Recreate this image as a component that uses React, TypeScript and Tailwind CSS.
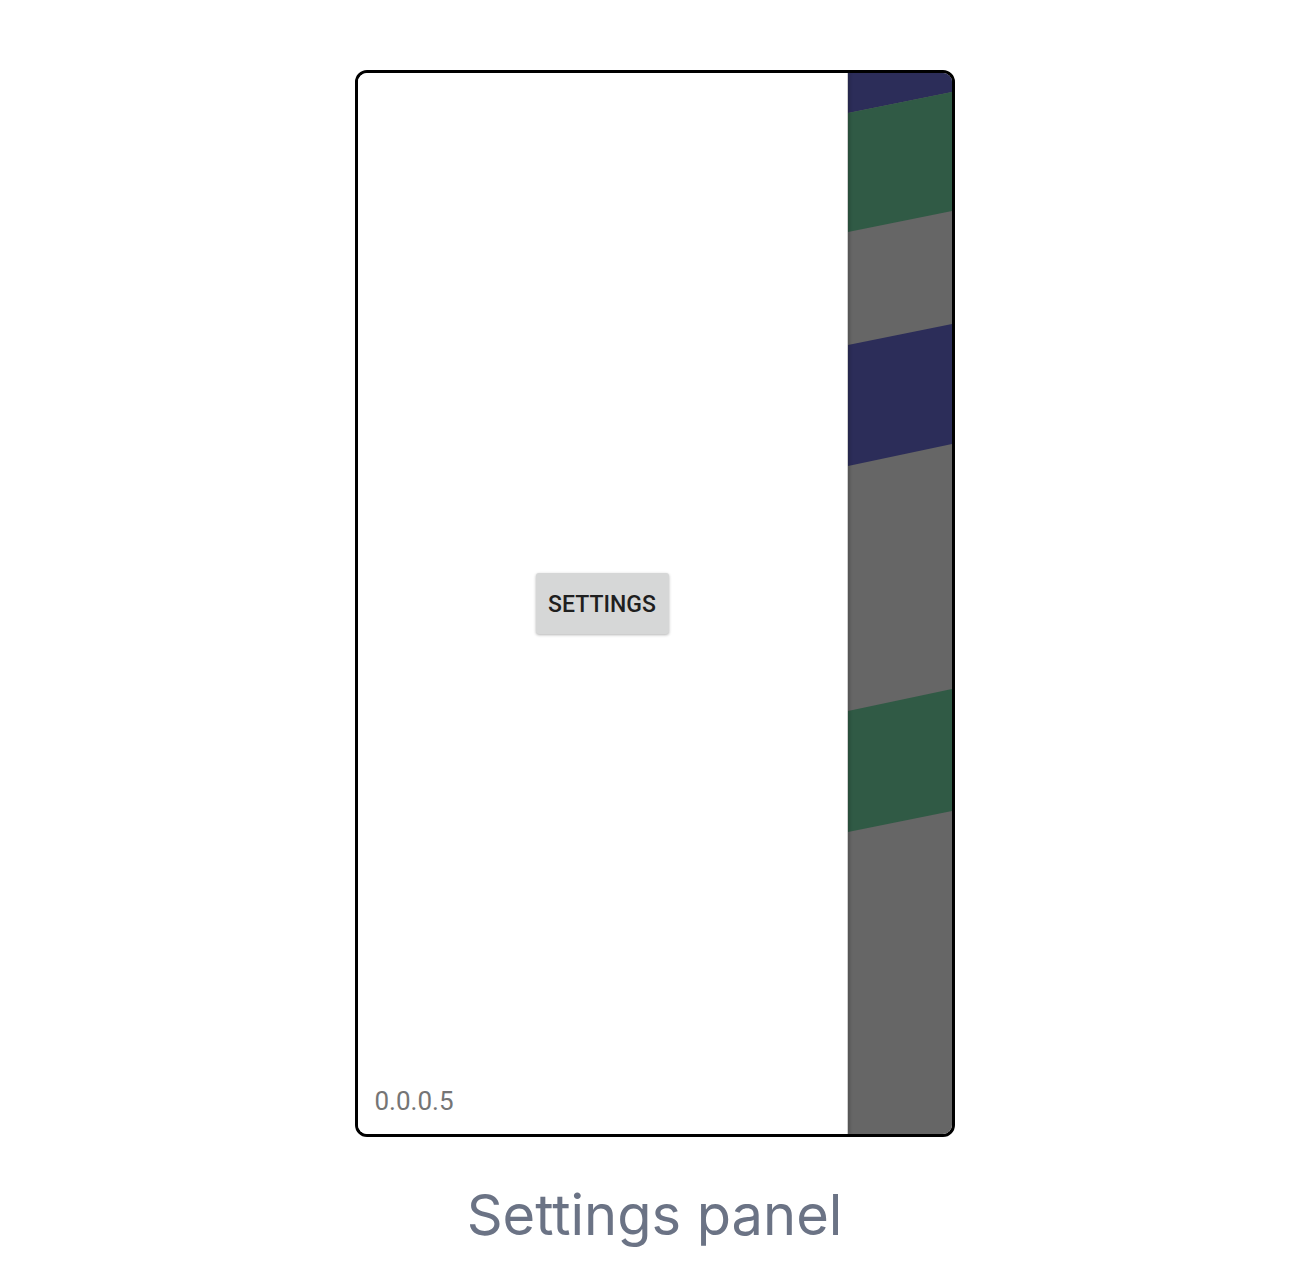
import React from 'react';

function Backdrop() {
  // the app content peeking out behind the drawer
  return (
    <svg className="absolute inset-0 h-full w-full" viewBox="0 0 104 1061" preserveAspectRatio="none">
      <rect x="0" y="0" width="104" height="1061" fill="#666666" />
      <polygon points="0,0 104,0 104,19 0,40" fill="#2c2d59" />
      <polygon points="0,40 104,19 104,138 0,159" fill="#305a45" />
      <polygon points="0,272 104,251 104,371 0,393" fill="#2c2d59" />
      <polygon points="0,638 104,616 104,738 0,759" fill="#305a45" />
    </svg>
  );
}

export default function App() {
  return (
    <div className="min-h-screen bg-white flex flex-col items-center pt-[70px]">
      <div className="w-[600px] h-[1067px] border-[3px] border-black rounded-[12px] overflow-hidden flex">
        <div className="w-[490px] h-full bg-white grid z-10 shadow-[2px_0_3px_rgba(0,0,0,0.18)] border-r border-[#d0d0d0]">
          <div className="[grid-area:1/1] flex items-center justify-center">
            <button className="w-[133px] h-[61px] pt-[4px] bg-[#d6d7d7] rounded-[3px] shadow-[0_1px_3px_rgba(0,0,0,0.3)] text-[23px] font-medium text-[#1f1f1f] font-['Roboto',sans-serif]">
              SETTINGS
            </button>
          </div>
          <div className="[grid-area:1/1] self-end pl-[17px] pb-[20px] text-[26px] leading-none text-[#757575] font-['Roboto',sans-serif]">
            0.0.0.5
          </div>
        </div>
        <div className="flex-1 relative">
          <Backdrop />
        </div>
      </div>
      <div className="mt-[50px] text-[56px] leading-none text-[#6b7385] font-['Inter',sans-serif]">
        Settings panel
      </div>
    </div>
  );
}
